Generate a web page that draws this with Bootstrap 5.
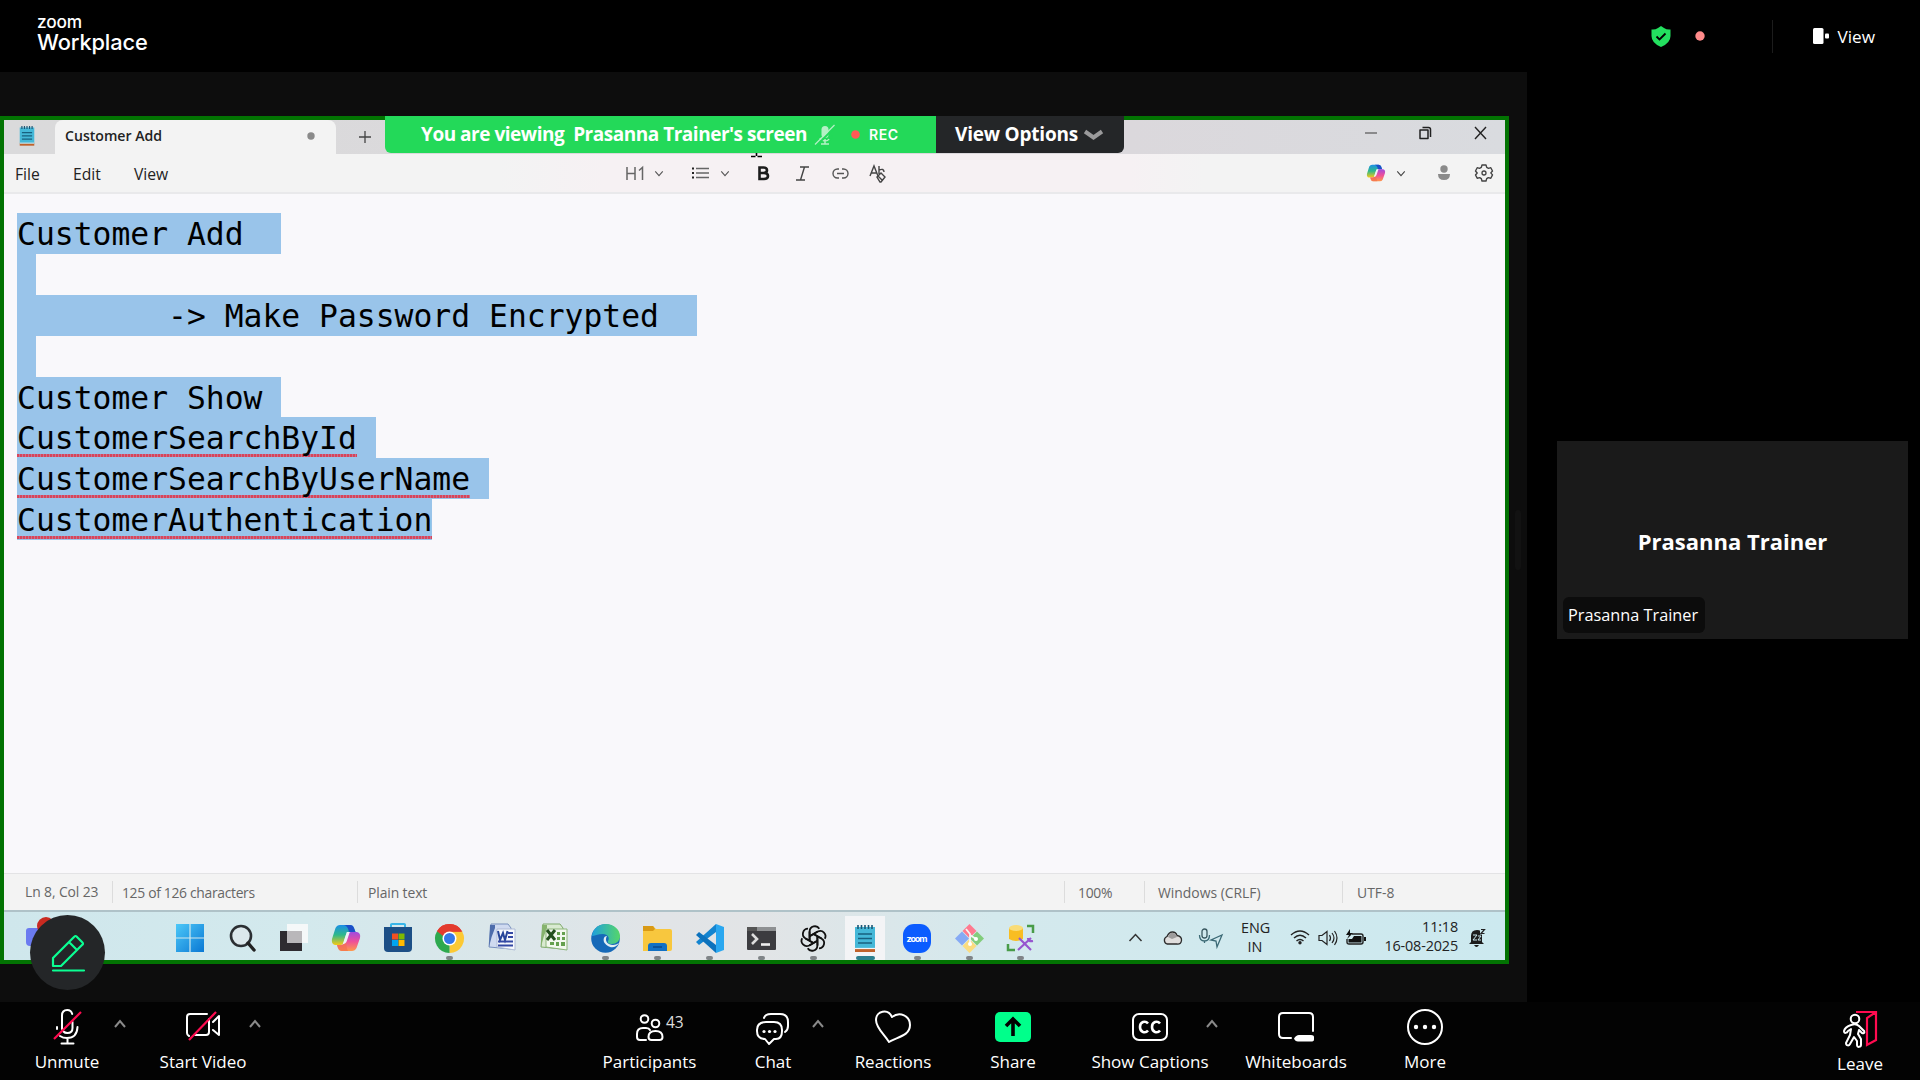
<!DOCTYPE html>
<html lang="en">
<head>
<meta charset="utf-8">
<title>Zoom Workplace</title>
<link href="https://cdn.jsdelivr.net/npm/bootstrap@5.3.0/dist/css/bootstrap.min.css" rel="stylesheet">
<style>
html,body{height:100%}
body{width:1920px;height:1080px;overflow:hidden;background:#000;color:#fff;font-family:"Open Sans","Noto Sans",sans-serif;font-size:16px;line-height:1.2}
svg{display:block;flex:none;overflow:visible}
.ln{fill:none;stroke:currentColor;stroke-width:2;stroke-linecap:round;stroke-linejoin:round}
.ln-thin{stroke:#3b5961;stroke-width:1.3}
.ln-pen{stroke-width:2.2}
.upper{height:1002px}
.left-pane{width:1527px}
.topbar{height:72px;padding-left:37px}
.brand{font-family:Inter,sans-serif;padding-top:12px;font-weight:500}
.brand-a{font-size:17.3px;line-height:19px;height:17px;letter-spacing:-.2px}
.brand-b{font-size:21.8px;line-height:27px;letter-spacing:-.1px}
.top-right{padding-right:45px}
.vw-text{font-size:17.2px;padding-top:2px}
.m-shield{margin:1px 24px 0 0}
.m-reddot{margin-right:67px}
.vw-rule{width:1px;height:33px;background:#1c1c1c;margin-right:40px}
.stage{width:1527px;height:930px;background:#0d0d0d;padding-top:44px}
.share{width:1509px;height:848px;border:4px solid #027302;background:#f9f8fb;color:#222}
.tabs{height:34px;background:linear-gradient(90deg,#dadadb,#dbd8dc 75%,#d9dbdf)}
.tab-app{width:51px;padding-left:15px;padding-bottom:3px}
.tab-on{width:281px;background:#f3f3f3;border-radius:8px 8px 0 0;padding:0 21px 2px 10px;font-size:14.1px;font-weight:600}
.tab-new{padding-left:23px}
.win-ctl{gap:42px;padding:6px 18px 0 0}
.tools{height:40px;background:linear-gradient(90deg,#f3f3f3 0 33%,#f6f1f3 40% 75%,#f3f3f3 80%);border-bottom:2px solid #e9e9eb;font-size:15.7px}
.menu-a,.menu-b,.menu-c{padding-top:2px}
.menu-a{margin-left:11px;width:58px}
.menu-b{width:61px}
.menu-c{width:492px}
.tool-set>svg:nth-child(1){margin-right:10px}
.tool-set>svg:nth-child(2){margin-right:28px;color:#555}
.tool-set>svg:nth-child(3){margin-right:11px}
.tool-set>svg:nth-child(4){margin-right:28px;color:#555}
.tool-set>svg:nth-child(5){margin-right:27px}
.tool-set>svg:nth-child(6){margin-right:23px}
.tool-set>svg:nth-child(7){margin-right:20px}
.tool-end{padding-right:12px}
.tool-end>svg:nth-child(1){margin-right:10px}
.tool-end>svg:nth-child(2){margin-right:32px;color:#444}
.tool-end>svg:nth-child(3){margin-right:25px}
.banner{left:385px;top:116px;height:37px;font-weight:700;font-size:19px;white-space:pre}
.ban-g{width:551px;background:#23d959;border-radius:0 0 0 6px;padding-left:36px;letter-spacing:-.48px}
.ban-d{width:188px;background:#242628;border-radius:0 0 6px 0;padding-left:19px;letter-spacing:-.2px}
.ban-mic{margin-left:8px}
.ban-dot{margin:0 9px 0 16px}
.ban-rec{font:600 14px Inter,sans-serif;letter-spacing:.6px}
.ban-chev{margin-left:6px}
.editor{height:679px;padding:19px 0 0 13px;font-family:"DejaVu Sans Mono",monospace;font-size:31.36px;color:#000}
.line{height:40.9px;line-height:43px;white-space:pre;background:#99c4ea;width:max-content}
.spell{background:linear-gradient(90deg,#d8445a 60%,#c47590 60%) 0 36.3px/3px 2.5px repeat-x}
.status{height:37px;background:#f3f3f3;border-top:1.5px solid #e3e3e5;font-size:13.9px;color:#666}
.st{border-left:1px solid #dcdcdc;height:22px;line-height:23px}
.st-0{margin-left:21px;width:87px;padding-top:1px;letter-spacing:-.1px}
.st-1{width:245px;padding-left:9px;letter-spacing:-.32px}
.st-2{width:707px;padding-left:10px;letter-spacing:-.1px}
.st-3{width:80px;padding-left:13px;letter-spacing:-.3px}
.st-4{width:198px;padding-left:13px}
.st-5{padding-left:14px}
.task{height:50px;background:linear-gradient(90deg,#cfe7ec,#d3e9ed 20%,#e1e4e7 44%,#e2e4e6 50%,#d4e9ed 66%,#cce9ef);border-top:2px solid #afc2c8}
.apps{margin-left:160px}
.app{width:51.95px;height:48px;padding-top:12px}
.app::after{content:"";width:7px;height:4px;border-radius:2px;background:transparent;margin-top:auto}
.run::after{background:#7f8487}
.app.act{background:linear-gradient(#f3f4f6,#f3f4f6) 50% 4px/40px 44px no-repeat}
.act::after{width:19px;background:#2b7f8f}
.tray{padding:3px 20px 0 0}
.tray>svg:nth-child(1){margin-right:21px}
.tray>svg:nth-child(2){margin-right:17px}
.tray>svg:nth-child(3){margin-right:18px}
.tray>svg:nth-child(5),.tray>svg:nth-child(6){margin-right:8px}
.clock{font-size:14.4px;line-height:18.5px;color:#222}
.lang{width:28px;margin-right:21px}
.date{width:92px;margin-right:11px;padding-bottom:2px;letter-spacing:-.15px}
.penbtn{left:30px;top:915px;width:75px;height:75px;background:#242628;color:#0bff93}
.teams{left:26px;top:918px}
.side{width:393px;padding-left:30px}
.tile{margin-top:369px;width:351px;height:198px;background:#1a1a1a;font-size:22px;font-weight:700;padding-top:2px}
.tile-tag{left:6px;bottom:6px;width:142px;height:36px;background:#0c0c0c;border-radius:6px;font-size:16.3px;font-weight:400;padding:2px 0 0 5px}
.grip{left:1515px;top:510px;width:6px;height:60px;background:#121212;border-radius:3px}
.ibeam{left:751px;top:153px}
.dock{height:78px;background:#030303}
.ctl{height:78px;width:100px;font-size:17px}
.ctl-i{height:36px;margin-top:7px}
.ctl-t{line-height:22px;margin-top:6px;white-space:nowrap}
.caret{color:#8a8a8a;padding-top:17px;width:14px}
.c-mute{margin-left:32px;width:70px}
.k-mute{margin-left:11px}
.c-video{margin-left:26px}
.k-video{margin-left:-5px}
.c-people{margin-left:336px;width:103px}
.n43{left:68px;top:11px;font-size:15.5px;color:#ddd}
.c-chat{margin-left:37px;width:70px}
.k-chat{margin-left:3px}
.c-react{margin-left:18px}
.c-share{margin-left:20px}
.c-cc{margin-left:27px;width:120px}
.k-cc{margin-left:-5px}
.c-board{margin-left:27px}
.c-more{margin-left:29px}
.c-leave{margin-right:25px;width:70px;padding-top:2px}
</style>
<script src="https://cdn.jsdelivr.net/npm/bootstrap@5.3.0/dist/js/bootstrap.bundle.min.js"></script>
</head>
<body class="d-flex flex-column">
<svg width="0" height="0" class="position-absolute">
<defs>
<linearGradient id="cpA" x1="0" y1="0" x2="0" y2="1"><stop offset="0" stop-color="#1b8fe8"/><stop offset=".5" stop-color="#2fb98a"/><stop offset="1" stop-color="#f6c916"/></linearGradient>
<linearGradient id="cpB" x1="0" y1="0" x2="0" y2="1"><stop offset="0" stop-color="#a04be0"/><stop offset=".5" stop-color="#ee4f9a"/><stop offset="1" stop-color="#ff9a4a"/></linearGradient>
<linearGradient id="win" x1="0" y1="0" x2="1" y2="1"><stop offset="0" stop-color="#4cc8f8"/><stop offset="1" stop-color="#0a78d4"/></linearGradient>
<linearGradient id="edA" x1="0" y1="0" x2="1" y2="0"><stop offset="0" stop-color="#1fa0dc"/><stop offset="1" stop-color="#55d66a"/></linearGradient>
<symbol id="copilot" viewBox="0 0 30 28"><path d="M9 1h10q3 0 4 3l1.500 4H19q-3 0-4 3l-2.500 8q-1 2-3 2H4Q0 20 1 15L4.500 4Q6 1 9 1z" fill="url(#cpA)"/><path d="M13 1h6q3 0 4 3l1.500 4H18q-1-6-5-7z" fill="#1c4fc8"/><path d="M21 27H11q-3 0-4-3l-1-3h4q3 0 4-3l3-8q1-2 3-2h6q4 1 3 6l-3.500 10Q24 27 21 27z" fill="url(#cpB)"/><path d="M21 27H11q-3 0-4-3l-1-3h4q3 0 4-3l1-2q0 7 2 11z" fill="#f4714f" opacity=".7"/><path d="m15.800 8-4 12q3 0 4-3l3-9z" fill="#eef3f5"/></symbol>
<symbol id="notepad" viewBox="0 0 22 28"><path d="M1 24h20v4H1z" fill="#c0622b"/><path d="M1 3h20v22H1z" fill="#45b8d8"/><path d="M4 1v4m3.500-4v4M11 1v4m3.500-4v4M18 1v4" stroke="#1b5775" stroke-width="1.600"/><path d="M4 10h14M4 14.500h14M4 19h14" stroke="#17607f" stroke-width="1.500"/><path d="M1 24.500h20" stroke="#f0f4f6" stroke-width="1.200"/></symbol>
<symbol id="up" viewBox="0 0 14 10"><path d="m2 8 5-6 5 6" fill="none" stroke="currentColor" stroke-width="2"/></symbol>
<symbol id="down" viewBox="0 0 12 8"><path d="m1.500 1.500 4.500 5 4.500-5" fill="none" stroke="currentColor" stroke-width="1.300"/></symbol>
</defs></svg>

<div class="upper d-flex">
 <div class="left-pane">
  <header class="topbar"><div class="brand"><div class="brand-a">zoom</div><div class="brand-b">Workplace</div></div></header>
  <main class="stage">
   <div class="share">
    <div class="tabs d-flex">
     <div class="tab-app d-flex align-items-center"><svg width="16" height="21"><use href="#notepad"/></svg></div>
     <div class="tab-on d-flex align-items-center justify-content-between"><span>Customer Add</span><svg width="8" height="8"><circle cx="4" cy="4" r="3.700" fill="#8a8a8a"/></svg></div>
     <div class="tab-new d-flex align-items-center flex-grow-1"><svg width="12" height="12"><path d="M6 0v12M0 6h12" stroke="#444" stroke-width="1.300"/></svg></div>
     <div class="win-ctl d-flex">
      <svg width="12" height="13"><path d="M0 7h12" stroke="#555" stroke-width="1.200"/></svg>
      <svg width="13" height="13"><path d="M1 4h8v8.500H1zM3.500 1.500h6q2 0 2 2V11" fill="none" stroke="#222" stroke-width="1.500" stroke-linejoin="round"/></svg>
      <svg width="13" height="13"><path d="m1 1 11 12M12 1 1 13" stroke="#222" stroke-width="1.400"/></svg>
     </div>
    </div>
    <div class="tools d-flex align-items-center">
     <span class="menu-a">File</span><span class="menu-b">Edit</span><span class="menu-c">View</span>
     <div class="tool-set d-flex align-items-center">
      <svg width="18" height="13"><path d="M1 0v13M9 0v13M1 6.500h8M13 3.500 16.500.500V13" fill="none" stroke="#666" stroke-width="1.500"/></svg>
      <svg width="10" height="7"><use href="#down"/></svg>
      <svg width="17" height="12"><path d="M4 1.500h13M4 6h13M4 10.500h13" stroke="#666" stroke-width="1.300"/><path d="M0 1.500h2M0 6h2M0 10.500h2" stroke="#222" stroke-width="2"/></svg>
      <svg width="10" height="7"><use href="#down"/></svg>
      <svg width="11" height="14"><path d="M1.500 1.500h4q3.500 0 3.500 2.700T5.500 7h-4 4.500Q10 7 10 10t-4 3H1.500z" fill="none" stroke="#1c1c1c" stroke-width="2.600"/></svg>
      <svg width="13" height="15"><path d="M4 1h9M0 14h9M8.500 1l-4 13" stroke="#444" stroke-width="1.400"/></svg>
      <svg width="17" height="11"><path d="M7 1H5.500a4.500 4.500 0 0 0 0 9H7M10 1h1.500a4.500 4.500 0 0 1 0 9H10M5 5.500h7" fill="none" stroke="#555" stroke-width="1.400"/></svg>
      <svg width="18" height="17"><path d="m1 11 4-10 4 10M2.200 8h5.500M10 1v8M10 5q5-2 5 2M8 12l4-4 4 4-4 5h-1zM9 11l4 4" fill="none" stroke="#444" stroke-width="1.400"/></svg>
     </div>
     <div class="tool-end ms-auto d-flex align-items-center">
      <svg width="20" height="18"><use href="#copilot"/></svg>
      <svg width="10" height="7"><use href="#down"/></svg>
      <svg width="12" height="16"><circle cx="6" cy="4" r="3.700" fill="#8a8a8a"/><path d="M0 9h12q0 6-6 6T0 9z" fill="#8a8a8a"/></svg>
      <svg width="18" height="18" viewBox="0 0 18 18"><path d="m7 1h4l.7 2.400 1.800 1 2.300-.7 1.700 3.300L15.800 8.900l1.700 2-1.700 3.300-2.500-.6-1.600 1L11 17H7l-.7-2.400-1.600-1-2.500.6L.5 11l1.700-2L.5 7l1.700-3.300 2.300.7 1.800-1z" fill="none" stroke="#444" stroke-width="1.400" stroke-linejoin="round"/><circle cx="9" cy="9" r="2" fill="none" stroke="#444" stroke-width="1.300"/></svg>
     </div>
    </div>
    <div class="editor">
     <div class="line">Customer Add  </div><div class="line"> </div><div class="line">        -&gt; Make Password Encrypted  </div><div class="line"> </div><div class="line">Customer Show </div><div class="line"><span class="spell d-inline-block">CustomerSearchById</span> </div><div class="line"><span class="spell d-inline-block">CustomerSearchByUserName</span> </div><div class="line"><span class="spell d-inline-block">CustomerAuthentication</span></div>
    </div>
    <div class="status d-flex align-items-center">
     <span class="st-0">Ln 8, Col 23</span><span class="st st-1">125 of 126 characters</span><span class="st st-2">Plain text</span><span class="st st-3">100%</span><span class="st st-4">Windows (CRLF)</span><span class="st st-5">UTF-8</span>
    </div>
    <div class="task d-flex">
     <div class="apps d-flex">
      <div class="app d-flex flex-column align-items-center"><svg width="28" height="28"><path d="M0 0h13.400v13.400H0zM14.600 0H28v13.400H14.600zM0 14.600h13.400V28H0zM14.600 14.600H28V28H14.600z" fill="url(#win)"/></svg></div>
      <div class="app d-flex flex-column align-items-center"><svg width="28" height="28"><circle cx="13" cy="12" r="10" fill="#dce8ec" stroke="#2b2f33" stroke-width="2.600"/><path d="m20 19 6 7" stroke="#222" stroke-width="3.400" stroke-linecap="round"/></svg></div>
      <div class="app d-flex flex-column align-items-center"><svg width="28" height="28"><path d="M0 7h22v20H0z" fill="#2e2b30"/><path d="M7 0h21v19H7z" fill="#fafafa" opacity=".86"/><path d="M7 7h15v12H7z" fill="#b9b7ba"/></svg></div>
      <div class="app d-flex flex-column align-items-center"><svg width="30" height="28"><use href="#copilot"/></svg></div>
      <div class="app d-flex flex-column align-items-center"><svg width="28" height="28"><path d="M7 4V.500Q7 0 8 0h12q1 0 1 .5V4" fill="none" stroke="#38b5e8" stroke-width="2"/><path d="M0 3h28v21q0 4-4 4H4q-4 0-4-4z" fill="#1c4f86"/><path d="M8 9.500h6v6H8z" fill="#f25022"/><path d="M14.500 9.500h6v6h-6z" fill="#7fba00"/><path d="M8 16h6v6H8z" fill="#00a4ef"/><path d="M14.500 16h6v6h-6z" fill="#ffb900"/></svg></div>
      <div class="app run d-flex flex-column align-items-center"><svg width="29" height="29" viewBox="0 0 29 29"><path d="M14.500 14.500 2 7.300A14.400 14.400 0 0 1 27 7.300z" fill="#e33b2e"/><path d="M14.500 14.500 27 7.300A14.400 14.400 0 0 1 14.500 29z" fill="#fcc934"/><path d="M14.500 14.500 14.500 29A14.400 14.400 0 0 1 2 7.300z" fill="#2da94f"/><path d="M14.500 7.500h13L20 19z" fill="#fcc934"/><path d="M2 7.300 8.300 18l4 1 2.200-11.500H8z" fill="#2da94f"/><path d="M2 7.300A14.400 14.400 0 0 1 27.200 7.700H14.500L8 12z" fill="#e33b2e"/><circle cx="14.500" cy="14.500" r="7" fill="#fff"/><circle cx="14.500" cy="14.500" r="5.500" fill="#3478e8"/></svg></div>
      <div class="app d-flex flex-column align-items-center"><svg width="28" height="28"><path d="M3 0h17l3 4v21L1 23z" fill="#cfdaf0" stroke="#7890bd"/><path d="M2 1h5v3Q3 13 1 23z" fill="#4d6cab"/><path d="M9 5h18v21L9 23z" fill="#f7f9fd" stroke="#aebbd6"/><path d="m10 7 2 9 3-7 2 7 2.500-9" fill="none" stroke="#28469a" stroke-width="2"/><path d="M20 9h5m-5 4h5m-15 4.500h15m-15 4h15" stroke="#3448a4" stroke-width="2"/></svg></div>
      <div class="app d-flex flex-column align-items-center"><svg width="28" height="28"><path d="M3 0h17l3 4v21L1 23z" fill="#d9ead1" stroke="#7faa6b"/><path d="M2 1h5v3Q3 13 1 23z" fill="#86b36d"/><path d="M6 5h21v21L6 23z" fill="#f2f8ee" stroke="#8db67b"/><path d="M17 8h3v3h-3zm5 0h3v3h-3zm-5 5h3v3h-3zm5 0h3v3h-3zM10 18h4v3h-4zm6 0h3v4h-3zm5 0h4v4h-4z" fill="#65a04e"/><path d="m7 6 8 10M15 6 7 16" stroke="#234f1d" stroke-width="3"/></svg></div>
      <div class="app run d-flex flex-column align-items-center"><svg width="29" height="29" viewBox="0 0 29 29"><circle cx="14.500" cy="14.500" r="14.300" fill="#1669b8"/><path d="M1 12C2 4 8 0 15 0c8 0 14 6 14 12 0 5-4 8-8 8-3 0-5-1-4-3 2-3 0-7-5-7-5 0-9 2-11 2z" fill="url(#edA)"/><path d="M16 12c-3 5 1 9 6 9q3 0 6-2c-5 8-13 3-15-1-1-3 0-6 3-6z" fill="#e2eef3"/></svg></div>
      <div class="app run d-flex flex-column align-items-center"><svg width="29" height="28"><path d="M0 2h10l3 3h14q2 0 2 2v18q0 2-2 2H0z" fill="#f8c73e"/><path d="M0 2h10l2 3-2 2H0z" fill="#d99a15"/><path d="M5 27v-5q0-3 3-3h13q3 0 3 3v5z" fill="#1271c4"/><path d="M10 23h9" stroke="#0b4a8c" stroke-width="1.500"/></svg></div>
      <div class="app run d-flex flex-column align-items-center"><svg width="29" height="29"><path d="m1 18 20-18v8L4 21z" fill="#1384d0"/><path d="m1 11 3-3 17 13v8L1 11z" fill="#0c72bd"/><path d="m21 0 8 3v23l-8 3z" fill="#2aa7f0"/></svg></div>
      <div class="app run d-flex flex-column align-items-center"><svg width="29" height="29"><path d="M0 3h29v22q0 1-1 1H1q-1 0-1-1z" fill="#3c3c40"/><path d="M0 3h29v4H0z" fill="#8e9092"/><path d="M0 3h10v4H0z" fill="#555"/><path d="m5 10 5 5-5 5" fill="none" stroke="#ddd" stroke-width="2.600"/><path d="M14 20.500h9" stroke="#eee" stroke-width="2.600"/></svg></div>
      <div class="app run d-flex flex-column align-items-center"><svg width="29" height="29" viewBox="0 0 24 24"><g fill="none" stroke="#111" stroke-width="1.500" stroke-linejoin="round"><path id="petal" d="M8.800 13.800V6a4.300 4.300 0 0 1 8-2M8.800 10.100l6.600-3.900"/><use href="#petal" transform="rotate(60 12 12)"/><use href="#petal" transform="rotate(120 12 12)"/><use href="#petal" transform="rotate(180 12 12)"/><use href="#petal" transform="rotate(240 12 12)"/><use href="#petal" transform="rotate(300 12 12)"/></g></svg></div>
      <div class="app run act d-flex flex-column align-items-center"><svg width="22" height="28"><use href="#notepad"/></svg></div>
      <div class="app run d-flex flex-column align-items-center"><svg width="29" height="29"><rect width="28" height="29" rx="11" fill="#0b5cff"/><text x="14" y="17.500" font-size="9" font-weight="700" fill="#fff" text-anchor="middle" font-family="Inter" textLength="21">zoom</text></svg></div>
      <div class="app run d-flex flex-column align-items-center"><svg width="29" height="29"><path d="m14.500 0 7 7-7 7-7-7z" fill="#ff7a8f"/><path d="m7 7.500 7 7-7 7-7-7z" fill="#86aaf5"/><path d="m22 7.500 7 7-7 7-7-7z" fill="#82cd7c"/><path d="m14.500 15 7 7-7 7-7-7z" fill="#fbdc80"/><path d="m11 5 4 5v10M15 11l6 4" stroke="#f5f5f5" stroke-width="1.800" fill="none"/><circle cx="15" cy="20" r="2" fill="#fff"/><circle cx="21" cy="15" r="2" fill="#fff"/></svg></div>
      <div class="app run d-flex flex-column align-items-center"><svg width="27" height="29"><path d="M2 4v11q7 4 14 0V4z" fill="#f8bd22"/><ellipse cx="9" cy="4" rx="7" ry="3" fill="#f9dc77"/><path d="M20 2h6v7M1 20v6h7" fill="none" stroke="#489c48" stroke-width="2.500"/><path d="m12 14 12 12M24 14 11 26M21 14q0 4 5 3" stroke="#9755cf" stroke-width="2.200" fill="none"/></svg></div>
     </div>
     <div class="tray ms-auto d-flex align-items-center">
      <svg width="13" height="9"><path d="m.5 8 6-6.500 6 6.500" fill="none" stroke="#333" stroke-width="1.500"/></svg>
      <svg width="19" height="14"><path d="M4 13a4 4 0 0 1 0-7.500Q6 1 9.500 1T14 4.500q5 1 4.500 5T14 13z" fill="#e0dedd" stroke="#2b2b2b" stroke-width="1.300"/><path d="M5 6q2-5 5-4 3 0 4 4l-5 2z" fill="#9d9c9c"/></svg>
      <svg width="24" height="20"><rect x="3" y="1" width="5" height="9" rx="2.500" class="ln ln-thin"/><path d="M.5 7q0 6 5 6t5-6M5.500 13v2M23 7l-5 12-1-6-5-1z" fill="none" stroke="#3b6975" stroke-width="1.300"/></svg>
      <div class="clock lang text-center"><div>ENG</div><div>IN</div></div>
      <svg width="20" height="15"><path d="M1 5q9-8 18 0M4 8q6-5.500 12 0M6.500 11q3.500-3 7 0" fill="none" stroke="#222" stroke-width="1.500"/><circle cx="10" cy="12.800" r="1.700" fill="#222"/></svg>
      <svg width="20" height="16"><path d="M1 5.500h3l5-4v13l-5-4H1zM11.500 5q2 3 0 6M14 3q4 5 0 10M16.500 1q5 7 0 14" fill="none" stroke="#222" stroke-width="1.200"/></svg>
      <svg width="20" height="16"><path d="M6 4h9q2 0 2 2v6q0 2-2 2H3q-2 0-2-2V9" fill="none" stroke="#222" stroke-width="1.400"/><path d="M8 6h7.500v6.500h-13V9H6zM18 7h2v4h-2zM4-1 0 5h3L1 9l6-6H4z" fill="#111"/></svg>
      <div class="clock date text-end"><div>11:18</div><div>16-08-2025</div></div>
      <svg width="16" height="18"><path d="M2 13V7q0-6 6-6 5 0 5 5v7l2 2H0zM5 16h5q-2.500 4-5 0" fill="#1c1c1c"/><path d="M4 6h4L4 11h4M9 7h3L9 11h3" fill="none" stroke="#cce9ef" stroke-width="1"/><path d="M11-.5h6v6h-6z" fill="#cce9ef"/><path d="M12 .5h3.500L12 4.500h3.500" fill="none" stroke="#222" stroke-width="1.200"/></svg>
     </div>
    </div>
   </div>
  </main>
 </div>
 <aside class="side">
  <div class="topbar top-right d-flex align-items-center justify-content-end">
   <svg class="m-shield" width="20" height="21" viewBox="0 0 20 21"><path d="m10 0 3 2q3 2 6.500 1.500V10q0 7-9.500 11Q.5 17 .5 10V3.500Q4 4 7 2z" fill="#23e05f"/><path d="m5.500 10.500 3 3 6-6" fill="none" stroke="#000" stroke-width="1.800"/></svg>
   <svg class="m-reddot" width="10" height="10"><circle cx="5" cy="5" r="4.700" fill="#ff8a8a"/></svg>
   <div class="vw-rule"></div>
   <svg width="16" height="16"><rect width="10.500" height="16" rx="1.500" fill="#fff"/><rect x="12" y="5.500" width="4" height="5" rx="1" fill="#fff"/></svg>
   <span class="vw-text ms-2">View</span>
  </div>
  <div class="tile position-relative d-flex align-items-center justify-content-center"><span>Prasanna Trainer</span><div class="tile-tag position-absolute d-flex align-items-center"><span>Prasanna Trainer</span></div></div>
 </aside>
</div>

<footer class="dock d-flex">
 <div class="ctl c-mute d-flex flex-column align-items-center"><div class="ctl-i"><svg width="26" height="36" viewBox="0 0 26 36"><g class="ln"><path d="M8 20V6.500Q8 1 13.200 1q4 0 5 4M18.500 13v6q0 5-5.200 5-2.500 0-3.800-1.500M3 18v2M6 27q3 2 7 2 10 0 10.500-11M13.500 29v5M7.500 34.500h12"/></g><path d="M0 30 27 3" stroke="#ff0b50" stroke-width="2.200"/></svg></div><div class="ctl-t">Unmute</div></div>
 <div class="caret k-mute"><svg width="14" height="10"><use href="#up"/></svg></div>
 <div class="ctl c-video d-flex flex-column align-items-center"><div class="ctl-i"><svg width="34" height="36" viewBox="0 0 34 36"><path class="ln" d="M3 27q-2-1-2-3V8q0-3 3-3h17M23 10v13q0 3-3 3H9M27 13l6-6v19l-6-5"/><path d="M3 31 30 3" stroke="#ff0b50" stroke-width="2.200"/></svg></div><div class="ctl-t">Start Video</div></div>
 <div class="caret k-video"><svg width="14" height="10"><use href="#up"/></svg></div>
 <div class="ctl c-people position-relative d-flex flex-column align-items-center"><div class="ctl-i"><svg width="28" height="36" viewBox="0 0 28 36"><g class="ln"><circle cx="8.500" cy="10" r="3.800"/><circle cx="19.500" cy="14.500" r="3.800"/><path d="M10 31H4q-3 0-3-3v-3q0-6 6-6h3q3 0 4 2M19.500 22q7 0 7 6 0 3-3 3h-8q-3 0-3-3 0-6 7-6z"/></g></svg></div><div class="ctl-t">Participants</div><span class="n43 position-absolute">43</span></div>
 <div class="ctl c-chat d-flex flex-column align-items-center"><div class="ctl-i"><svg width="34" height="36" viewBox="0 0 34 36"><path class="ln" d="M8 9q1-4 7-4h9q8 0 8 8v4q0 4-3 6M10 13h8q8 0 8 8v1q0 8-6 8h-2l-5 5-4-5q-8 0-8-8v-1q0-8 9-8z"/><g fill="#fff"><circle cx="8" cy="22.500" r="1.600"/><circle cx="13.500" cy="22.500" r="1.600"/><circle cx="19" cy="22.500" r="1.600"/></g></svg></div><div class="ctl-t">Chat</div></div>
 <div class="caret k-chat"><svg width="14" height="10"><use href="#up"/></svg></div>
 <div class="ctl c-react d-flex flex-column align-items-center"><div class="ctl-i"><svg width="36" height="36" viewBox="0 0 36 36"><path class="ln" d="M14 33C9 25 1 19 1 11c0-9 12-12 16-3 8-6 18-1 18 8 0 11-13 12-21 17z"/></svg></div><div class="ctl-t">Reactions</div></div>
 <div class="ctl c-share d-flex flex-column align-items-center"><div class="ctl-i"><svg width="36" height="36"><rect y="3" width="36" height="30" rx="5" fill="#00ff8b"/><path d="M18 27V12m-7 5 7-7 7 7" fill="none" stroke="#000" stroke-width="3.600"/></svg></div><div class="ctl-t">Share</div></div>
 <div class="ctl c-cc d-flex flex-column align-items-center"><div class="ctl-i"><svg width="36" height="36"><rect class="ln" x="1" y="5" width="34" height="26" rx="6"/><path d="M16 14.500q-2-2.500-5-1.500-3 1-3 5t3 5q3 1 5-1.500M28 14.500q-2-2.500-5-1.500-3 1-3 5t3 5q3 1 5-1.500" fill="none" stroke="#fff" stroke-width="2.600"/></svg></div><div class="ctl-t">Show Captions</div></div>
 <div class="caret k-cc"><svg width="14" height="10"><use href="#up"/></svg></div>
 <div class="ctl c-board d-flex flex-column align-items-center"><div class="ctl-i"><svg width="36" height="36"><path class="ln" d="M13 29H5q-4 0-4-4V8q0-4 4-4h26q4 0 4 4v14"/><path d="M16 29.500q2-3.500 5-3.500h12q3 0 3 2v2.500q0 2-3 2H20q-3 0-4-3z" fill="#fff"/></svg></div><div class="ctl-t">Whiteboards</div></div>
 <div class="ctl c-more d-flex flex-column align-items-center"><div class="ctl-i"><svg width="36" height="36"><circle class="ln" cx="18" cy="18" r="17"/><g fill="#fff"><circle cx="9" cy="18" r="2.200"/><circle cx="18" cy="18" r="2.200"/><circle cx="27" cy="18" r="2.200"/></g></svg></div><div class="ctl-t">More</div></div>
 <div class="ctl c-leave d-flex flex-column align-items-center ms-auto"><div class="ctl-i"><svg width="36" height="36" viewBox="0 0 36 36"><path d="M14 1h20v28l-9 5V7l9-6" fill="none" stroke="#ff0b50" stroke-width="2.200"/><g class="ln"><circle cx="13" cy="8" r="4.300"/><path d="M9 14q-6 2-7 6c0 3 3 2 4 0l3-2-1 6-4 8c0 3 3 3 4 1l4-7 3 4v4c0 3 4 2 4 0v-6l-3-5 1-4 3 3c3 1 3-2 1-3l-4-4q-3-3-8-1z"/></g></svg></div><div class="ctl-t">Leave</div></div>
</footer>

<div class="banner position-absolute d-flex">
 <div class="ban-g d-flex align-items-center text-white"><span>You are viewing  Prasanna Trainer's screen</span><svg class="ban-mic" width="20" height="20"><rect x="6.500" y="1" width="7" height="12" rx="3.500" fill="#b5f1c5"/><path d="M3 10q0 6 7 6t7-6" fill="none" stroke="#23d959" stroke-width="1.500"/><path d="M10 14v5M6 19h8M5 13q1 2.500 5 3 3 0 4-2" fill="none" stroke="#b5f1c5" stroke-width="1.500"/><path d="M1.500 20.500 20.500 1.500" stroke="#23d959" stroke-width="2"/><path d="M0 19.500 19.500 0" stroke="#b5f1c5" stroke-width="1.300"/></svg><svg class="ban-dot" width="9" height="9"><circle cx="4.500" cy="4.500" r="4.300" fill="#ff5a55"/></svg><span class="ban-rec">REC</span></div>
 <div class="ban-d d-flex align-items-center text-white"><span>View Options</span><svg class="ban-chev" width="19" height="10"><path d="m1 1.500 8.500 6 8.500-6" fill="none" stroke="#9a9a9b" stroke-width="4"/></svg></div>
</div>
<svg class="ibeam position-absolute" width="11" height="4"><path d="M5.500 0v3M0 3.500h4.500M6.500 3.500H11" stroke="#000" stroke-width="1.600"/></svg>
<div class="grip position-absolute"></div>
<svg class="teams position-absolute" width="27" height="29"><path d="M0 13q0-3 3-3h20v18H4q-4 0-4-4z" fill="#6b7bf0"/><circle cx="20" cy="8" r="9" fill="#c92a20"/></svg>
<div class="penbtn position-absolute rounded-circle d-flex align-items-center justify-content-center"><svg width="32" height="36" viewBox="0 0 32 36"><path class="ln ln-pen" d="M1 31v-8L22 2q2-2 3 0l5 5q2 2 0 3L9 31zM17 7l8 8M1 35.500h31"/></svg></div>
</body>
</html>
